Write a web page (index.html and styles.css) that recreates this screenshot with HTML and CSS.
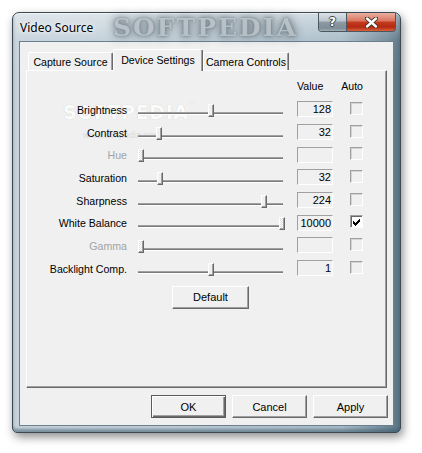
FILE: index.html
```html
<!DOCTYPE html>
<html>
<head>
<meta charset="utf-8">
<title>Video Source</title>
<link rel="stylesheet" href="styles.css">
</head>
<body>
<div class="window">
  <div class="titlebar">
    <span class="title">Video Source</span>
    <span class="wm-title">SOFTPEDIA</span>
    <div class="caption-btns">
      <div class="cbtn help">?</div>
      <div class="cbtn close">
        <svg width="13" height="11" viewBox="0 0 13 11">
          <path d="M2 1.5 L11 9.5 M11 1.5 L2 9.5" stroke="#3a2a26" stroke-width="4.2" stroke-linecap="round"/>
          <path d="M2 1.5 L11 9.5 M11 1.5 L2 9.5" stroke="#ffffff" stroke-width="2.4" stroke-linecap="round"/>
        </svg>
      </div>
    </div>
  </div>
  <div class="client">
    <div class="tabs">
      <div class="tabstrip">
        <div class="tab t1">Capture Source</div>
        <div class="tab sel t2">Device Settings</div>
        <div class="tab t3">Camera Controls</div>
      </div>
      <div class="panel">
        <div class="wm1">SOFTPEDIA<span class="tm">™</span></div>
        <div class="wm2">www.softpedia.com</div>
        <div class="hdr"><span>Value</span><span>Auto</span></div>
        <div class="grid">
          <div class="lbl">Brightness</div>
          <div class="slider"><div class="track"></div><div class="thumb" style="left:70px"></div></div>
          <div class="val">128</div>
          <div class="chk"></div>

          <div class="lbl">Contrast</div>
          <div class="slider"><div class="track"></div><div class="thumb" style="left:18px"></div></div>
          <div class="val">32</div>
          <div class="chk"></div>

          <div class="lbl dis">Hue</div>
          <div class="slider"><div class="track"></div><div class="thumb hatch" style="left:0px"></div></div>
          <div class="val"></div>
          <div class="chk"></div>

          <div class="lbl">Saturation</div>
          <div class="slider"><div class="track"></div><div class="thumb" style="left:19px"></div></div>
          <div class="val">32</div>
          <div class="chk"></div>

          <div class="lbl">Sharpness</div>
          <div class="slider"><div class="track"></div><div class="thumb" style="left:123px"></div></div>
          <div class="val">224</div>
          <div class="chk"></div>

          <div class="lbl">White Balance</div>
          <div class="slider"><div class="track"></div><div class="thumb hatch" style="left:141px"></div></div>
          <div class="val">10000</div>
          <div class="chk on">
            <svg width="7" height="7" viewBox="0 0 7 7" shape-rendering="crispEdges">
              <path d="M6 0h1v1h-1z M5 1h2v1h-2z M0 2h1v1h-1z M4 2h3v1h-3z M0 3h2v1h-2z M3 3h3v1h-3z M0 4h5v1h-5z M1 5h3v1h-3z M2 6h1v1h-1z" fill="#000"/>
            </svg>
          </div>

          <div class="lbl dis">Gamma</div>
          <div class="slider"><div class="track"></div><div class="thumb hatch" style="left:0px"></div></div>
          <div class="val"></div>
          <div class="chk"></div>

          <div class="lbl">Backlight Comp.</div>
          <div class="slider"><div class="track"></div><div class="thumb" style="left:70px"></div></div>
          <div class="val">1</div>
          <div class="chk"></div>
        </div>
        <div class="default-row"><div class="btn default-btn">Default</div></div>
      </div>
    </div>
    <div class="actions">
      <div class="btn primary">OK</div>
      <div class="btn">Cancel</div>
      <div class="btn">Apply</div>
    </div>
  </div>
</div>
</body>
</html>
```

FILE: styles.css
```css
html, body {
  margin: 0;
  padding: 0;
}
body {
  width: 422px;
  height: 453px;
  overflow: hidden;
  background: #ffffff;
  font-family: "Liberation Sans", Arial, sans-serif;
  font-size: 10.6px;
  color: #000;
}

.window {
  margin: 12px 0 0 12px;
  width: 389px;
  height: 421px;
  box-sizing: border-box;
  border: 1px solid #3c4a54;
  border-radius: 7px 7px 5px 5px;
  padding: 0 6px 6px 6px;
  display: flex;
  flex-direction: column;
  background:
    linear-gradient(to bottom, rgba(255,255,255,0.45) 0, rgba(255,255,255,0.05) 28px, rgba(255,255,255,0) 60px),
    linear-gradient(to right, #c6d3dc 0, #bfcdd7 40%, #a9bcc8 85%, #6f8897 97%, #587282 100%);
  box-shadow: 2px 4px 10px rgba(0,0,0,0.45), inset 0 -3px 3px rgba(60,90,105,0.55), inset 0 1px 0 rgba(255,255,255,0.6);
}

.titlebar {
  height: 28px;
  display: flex;
  align-items: center;
  position: relative;
  flex: none;
}
.title {
  padding-left: 1px;
  font-family: "Noto Sans", "Open Sans", sans-serif;
  font-size: 12px;
  color: #000;
  text-shadow: 0 0 6px rgba(255,255,255,0.95), 0 0 3px rgba(255,255,255,0.9);
  position: relative;
  z-index: 2;
}
.wm-title {
  position: absolute;
  left: 94px;
  top: 1px;
  font-family: "DejaVu Serif", serif;
  font-weight: bold;
  font-size: 25px;
  letter-spacing: 2px;
  line-height: 28px;
  color: #b3bcc2;
  text-shadow: 0 0 3px #55636d, 0 0 8px #5e6b74, 0 0 12px #6a777f;
  filter: blur(0.7px);
  opacity: 0.8;
  z-index: 1;
}
.caption-btns {
  margin-left: auto;
  margin-right: -2px;
  align-self: flex-start;
  display: flex;
  height: 19px;
  border: 1px solid #4a5760;
  border-top: none;
  border-radius: 0 0 4px 4px;
  overflow: hidden;
  box-sizing: border-box;
  position: relative;
  z-index: 2;
}
.cbtn {
  height: 100%;
  display: flex;
  align-items: center;
  justify-content: center;
}
.help {
  width: 27px;
  border-right: 1px solid #4a5760;
  background: linear-gradient(to bottom, #dbe2e7 0, #b9c4cb 45%, #8e9ba4 50%, #7f8d96 85%, #a3b0b8 100%);
  color: #fff;
  font-family: "DejaVu Sans", sans-serif;
  font-weight: bold;
  font-size: 12px;
  text-shadow: 1px 0 0 #3b464d, -1px 0 0 #3b464d, 0 1px 0 #3b464d, 0 -1px 0 #3b464d;
}
.close {
  width: 48px;
  background: linear-gradient(to bottom, #eab0a2 0, #d9745f 45%, #c43b20 50%, #b32a12 78%, #d9603a 100%);
}

.client {
  flex: 1;
  background: #f0f0f0;
  border: 1px solid #6b7f8c;
  display: flex;
  flex-direction: column;
}

.tabs {
  margin: 7px 6px 0 6px;
  display: flex;
  flex-direction: column;
}
.tabstrip {
  height: 21px;
  display: flex;
  align-items: flex-end;
  padding-left: 2px;
}
.tab {
  height: 18px;
  box-sizing: border-box;
  border-top: 1px solid #ffffff;
  border-left: 1px solid #ffffff;
  border-right: 1px solid #696969;
  border-radius: 2px 2px 0 0;
  box-shadow: inset -1px 0 0 #a0a0a0;
  display: flex;
  align-items: center;
  justify-content: center;
  white-space: nowrap;
  background: #f0f0f0;
}
.t1 { width: 85px; }
.t2 { width: 90px; }
.t3 { width: 86px; }
.tab.sel {
  height: 22px;
  margin-bottom: -1px;
  padding-bottom: 2px;
  position: relative;
  z-index: 3;
}

.panel {
  height: 318px;
  box-sizing: border-box;
  border-top: 1px solid #ffffff;
  border-left: 1px solid #ffffff;
  border-right: 1px solid #696969;
  border-bottom: 1px solid #696969;
  box-shadow: inset -1px -1px 0 #a0a0a0;
  position: relative;
}
.wm1 {
  position: absolute;
  left: 36px;
  top: 30px;
  font-family: "DejaVu Sans", sans-serif;
  font-weight: bold;
  font-size: 19px;
  letter-spacing: 0.6px;
  color: #fbfbfb;
  text-shadow: 0 0 1px #c4c4c4;
  z-index: 0;
}
.wm1 .tm {
  font-size: 8px;
  vertical-align: top;
  font-weight: normal;
}
.wm2 {
  position: absolute;
  left: 56px;
  top: 59px;
  font-size: 9px;
  color: #dadada;
  z-index: 0;
}
.hdr {
  position: relative;
  z-index: 1;
  margin: 9px 0 0 270px;
  width: 66px;
  height: 13px;
  line-height: 13px;
  display: flex;
  justify-content: space-between;
}
.grid {
  position: relative;
  z-index: 1;
  margin-top: 5px;
  display: grid;
  grid-template-columns: 111px 159px 53px 13px;
  grid-auto-rows: 22.7px;
  align-items: center;
}
.lbl {
  text-align: right;
  padding-right: 11px;
  line-height: 13px;
  white-space: nowrap;
  padding-top: 2px;
}
.lbl.dis {
  color: #a3a3a3;
}
.slider {
  position: relative;
  height: 100%;
}
.track {
  margin-top: 14px;
  width: 145px;
  height: 3px;
  box-sizing: border-box;
  border-top: 1px solid #a0a0a0;
  border-bottom: 1px solid #ffffff;
  background: #7a7a7a;
}
.thumb {
  position: absolute;
  top: 6px;
  width: 6px;
  height: 13px;
  box-sizing: border-box;
  background: #f0f0f0;
  border-top: 1px solid #ffffff;
  border-left: 1px solid #ffffff;
  border-right: 1px solid #696969;
  border-bottom: 1px solid #696969;
  box-shadow: inset -1px -1px 0 #a0a0a0;
}
.thumb.hatch {
  background: repeating-conic-gradient(#ffffff 0 25%, #dedede 0 50%) 0 0 / 2px 2px;
}
.val {
  width: 36px;
  height: 16px;
  box-sizing: border-box;
  border: 1px solid;
  border-color: #a0a0a0 #ffffff #ffffff #a0a0a0;
  text-align: right;
  padding-right: 1px;
  line-height: 14px;
  font-size: 11px;
}
.chk {
  width: 13px;
  height: 13px;
  box-sizing: border-box;
  border: 1px solid;
  border-color: #a0a0a0 #ffffff #ffffff #a0a0a0;
  box-shadow: inset 1px 1px 0 #d4d4d4;
  margin-top: -2px;
  display: flex;
  align-items: flex-end;
  justify-content: center;
  padding-bottom: 1px;
}
.chk.on {
  background: #ffffff;
  box-shadow: inset 1px 1px 0 #696969;
}

.default-row {
  margin: 6px 0 0 145px;
}
.btn {
  width: 75px;
  height: 23px;
  box-sizing: border-box;
  background: #f0f0f0;
  border-top: 1px solid #ffffff;
  border-left: 1px solid #ffffff;
  border-right: 1px solid #696969;
  border-bottom: 1px solid #696969;
  box-shadow: inset -1px -1px 0 #a0a0a0;
  display: flex;
  align-items: center;
  justify-content: center;
  font-size: 11px;
}
.default-btn {
  width: 77px;
}
.btn.primary {
  border: 1px solid #5a5a5a;
  box-shadow: inset 1px 1px 0 #ffffff, inset -1px -1px 0 #696969, inset -2px -2px 0 #a0a0a0;
}
.actions {
  margin-top: 7px;
  display: flex;
  justify-content: flex-end;
  gap: 6px;
  padding-right: 5px;
}
```
